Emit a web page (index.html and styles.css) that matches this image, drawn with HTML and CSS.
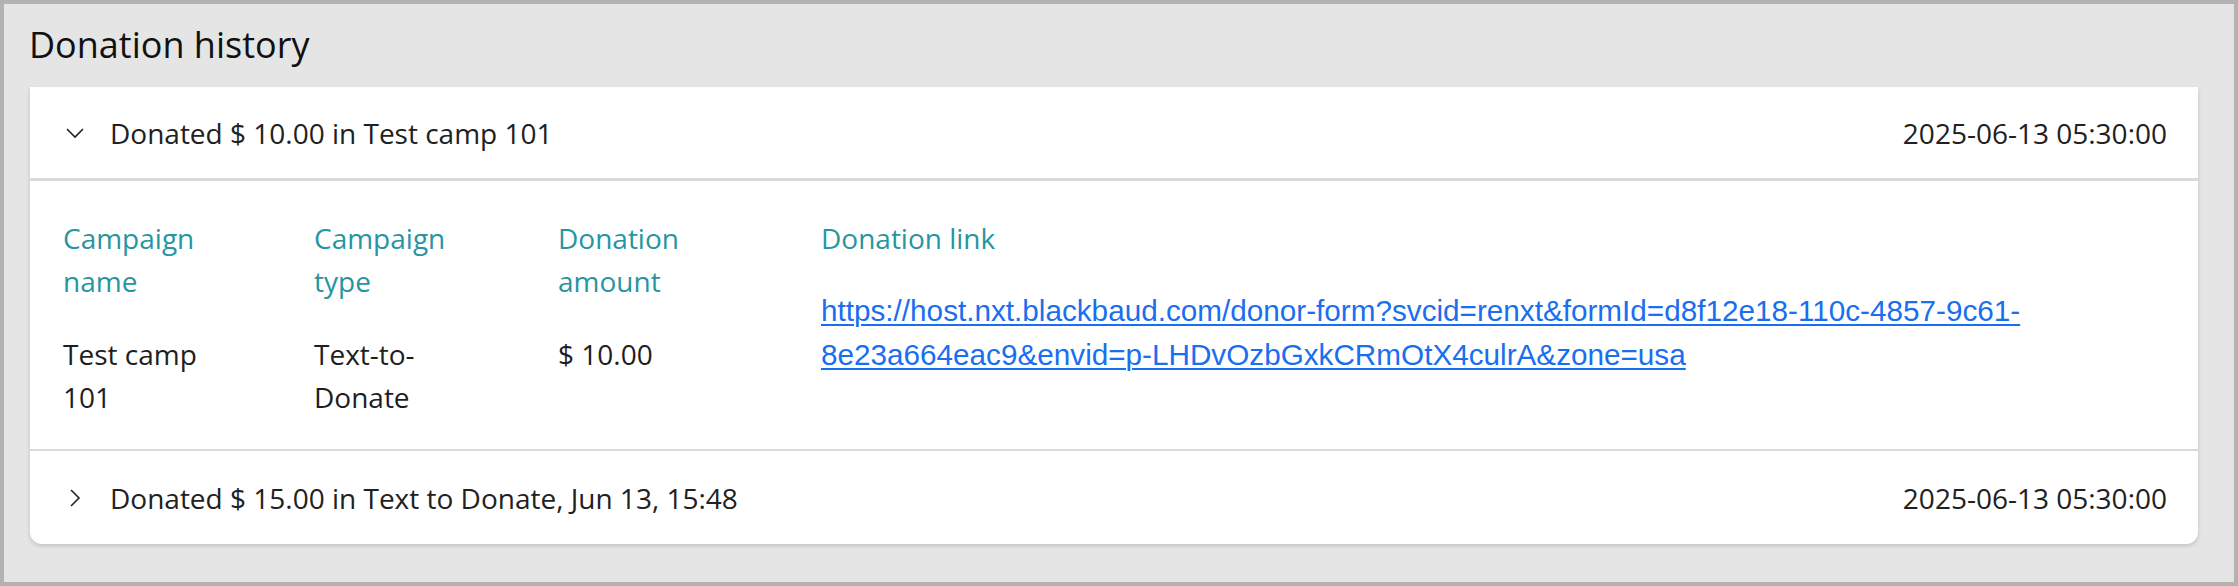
FILE: index.html
```html
<!DOCTYPE html>
<html lang="en">
<head>
<meta charset="utf-8">
<title>Donation history</title>
<link rel="stylesheet" href="styles.css">
</head>
<body>
<div class="frame">
  <h2 class="title">Donation history</h2>
  <div class="card">
    <div class="row row-open">
      <div class="row-left">
        <svg class="chev" viewBox="0 0 18 18" width="18" height="18"><path d="M1 5 L9 13 L17 5" fill="none" stroke="#222" stroke-width="1.6"/></svg>
        <span>Donated $ 10.00 in Test camp 101</span>
      </div>
      <span class="date">2025-06-13 05:30:00</span>
    </div>
    <div class="details">
      <div class="col c1">
        <div class="label">Campaign name</div>
        <div class="value">Test camp 101</div>
      </div>
      <div class="col c2">
        <div class="label">Campaign type</div>
        <div class="value">Text-to-Donate</div>
      </div>
      <div class="col c3">
        <div class="label">Donation amount</div>
        <div class="value">$ 10.00</div>
      </div>
      <div class="col c4">
        <div class="label">Donation link</div>
        <a class="link" href="#">https://host.nxt.blackbaud.com/donor-form?svcid=renxt&amp;formId=d8f12e18-110c-4857-9c61-8e23a664eac9&amp;envid=p-LHDvOzbGxkCRmOtX4culrA&amp;zone=usa</a>
      </div>
    </div>
    <div class="row row-last">
      <div class="row-left">
        <svg class="chev" viewBox="0 0 18 18" width="18" height="18"><path d="M5 1 L13 9 L5 17" fill="none" stroke="#222" stroke-width="1.6"/></svg>
        <span>Donated $ 15.00 in Text to Donate, Jun 13, 15:48</span>
      </div>
      <span class="date">2025-06-13 05:30:00</span>
    </div>
  </div>
</div>
</body>
</html>
```
FILE: styles.css
```css
html, body {
  margin: 0;
  padding: 0;
}
body {
  font-family: "Open Sans", "Noto Sans", sans-serif;
  color: #212121;
}
.frame {
  box-sizing: border-box;
  width: 2238px;
  height: 586px;
  border: 4px solid #b2b2b2;
  background: #e5e5e5;
  padding: 19px 36px 0 26px;
}
.title {
  margin: 0 0 20px -1px;
  font-size: 36px;
  font-weight: 400;
  line-height: 44px;
  color: #111;
}
.card {
  background: #fff;
  border-radius: 0 0 12px 12px;
  box-shadow: 0 2px 4px rgba(0, 0, 0, 0.15);
}
.row {
  display: flex;
  align-items: center;
  justify-content: space-between;
  height: 91px;
  padding: 0 31px 0 36px;
  font-size: 28px;
  line-height: 42px;
}
.row-open {
  border-bottom: 3px solid #dadada;
}
.row-last {
  height: 93px;
}
.row-left {
  display: flex;
  align-items: center;
  gap: 26px;
}
.chev {
  display: block;
  flex: none;
}
.details {
  display: grid;
  grid-template-columns: 251px 244px 263px 1fr;
  padding: 36px 31px 30px 33px;
  border-bottom: 2px solid #dadada;
  font-size: 28px;
  line-height: 43px;
}
.col {
  display: flex;
  flex-direction: column;
  gap: 30px;
  padding-right: 70px;
}
.c4 {
  padding-right: 0;
  gap: 29px;
}
.label {
  color: #2795a1;
}
.value {
  color: #1e1e1e;
}
.link {
  font-family: "Liberation Sans", Arial, sans-serif;
  font-size: 29.7px;
  line-height: 44px;
  color: #1a6ef0;
  text-decoration: underline;
  text-decoration-thickness: 2px;
  text-underline-offset: 3px;
  max-width: 1350px;
}
```
